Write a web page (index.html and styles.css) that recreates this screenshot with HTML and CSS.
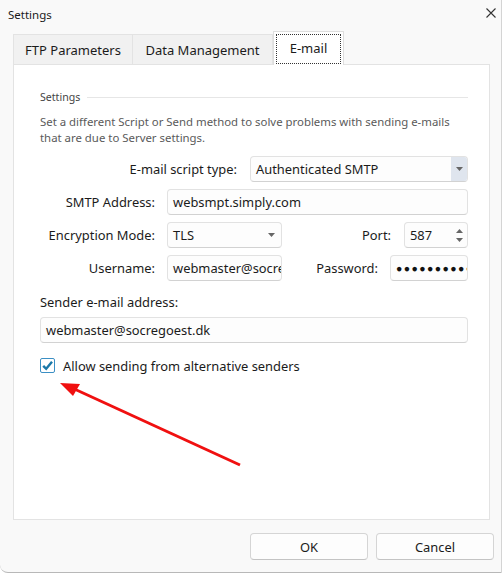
FILE: index.html
```html
<!DOCTYPE html>
<html>
<head>
  <title>Settings</title>
  <link rel="stylesheet" href="styles.css">
</head>
<body>
  <div class="window">
    <div class="titlebar">
      <span class="title">Settings</span>
      <svg class="close" width="10" height="10" viewBox="0 0 10 10">
        <path d="M0.5 0.5 L9.5 9.5 M9.5 0.5 L0.5 9.5" stroke="#333" stroke-width="1.1" fill="none"/>
      </svg>
    </div>

    <div class="tabs">
      <div class="tab tab-ftp">FTP Parameters</div>
      <div class="tab tab-data">Data Management</div>
      <div class="tab tab-mail active"><span class="focus">E-mail</span></div>
    </div>

    <div class="panel">
      <div class="legend"><span>Settings</span><div class="legend-line"></div></div>
      <p class="desc">Set a different Script or Send method to solve problems with sending e-mails<br>that are due to Server settings.</p>

      <div class="row row-first">
        <label class="lbl lbl-wide">E-mail script type:</label>
        <div class="field select select-wide">
          <span>Authenticated SMTP</span>
          <div class="drop drop-shaded">
            <svg width="7" height="4" viewBox="0 0 7 4"><path d="M0 0 H7 L3.5 4 Z" fill="#666"/></svg>
          </div>
        </div>
      </div>

      <div class="row">
        <label class="lbl">SMTP Address:</label>
        <div class="field grow">websmpt.simply.com</div>
      </div>

      <div class="row">
        <label class="lbl">Encryption Mode:</label>
        <div class="field select small">
          <span>TLS</span>
          <div class="drop">
            <svg width="7" height="4" viewBox="0 0 7 4"><path d="M0 0 H7 L3.5 4 Z" fill="#666"/></svg>
          </div>
        </div>
        <label class="lbl lbl-port">Port:</label>
        <div class="field spin">
          <span>587</span>
          <div class="spin-btns">
            <svg width="7" height="4" viewBox="0 0 7 4"><path d="M0 4 H7 L3.5 0 Z" fill="#666"/></svg>
            <svg width="7" height="4" viewBox="0 0 7 4"><path d="M0 0 H7 L3.5 4 Z" fill="#666"/></svg>
          </div>
        </div>
      </div>

      <div class="row">
        <label class="lbl">Username:</label>
        <div class="field small clip"><span class="clip-text">webmaster@socregoest.dk</span></div>
        <label class="lbl lbl-pass">Password:</label>
        <div class="field pass clip"><span class="clip-text">●●●●●●●●●●</span></div>
      </div>

      <div class="sender-label">Sender e-mail address:</div>
      <div class="field sender">webmaster@socregoest.dk</div>

      <div class="check-row">
        <span class="checkbox">
          <svg width="13" height="13" viewBox="0 0 13 13"><path d="M2.2 6.8 L5.2 9.8 L11 2.8" stroke="#1b78a8" stroke-width="2.4" fill="none"/></svg>
        </span>
        <span>Allow sending from alternative senders</span>
      </div>
    </div>

    <div class="footer">
      <button class="btn">OK</button>
      <button class="btn">Cancel</button>
    </div>

    <svg class="arrow" width="502" height="573" viewBox="0 0 502 573">
      <line x1="240" y1="465" x2="70" y2="387" stroke="#f01010" stroke-width="3"/>
      <polygon points="60,383 80,384 73,396" fill="#f01010"/>
    </svg>
  </div>
</body>
</html>
```

FILE: styles.css
```css
html, body {
  margin: 0;
  padding: 0;
}
body {
  font-family: "Noto Sans", "Open Sans", sans-serif;
  color: #1b1b1b;
  background: #ffffff;
}
.window {
  position: relative;
  width: 501px;
  height: 572px;
  background: #f9f9f9;
  border-right: 1px solid #d4d4d4;
  border-bottom: 1px solid #b8b8b8;
  border-bottom-left-radius: 8px;
  overflow: hidden;
}
.titlebar {
  height: 28px;
  display: flex;
  align-items: center;
  justify-content: space-between;
  padding: 0 5px 0 8px;
}
.title {
  font-size: 11.5px;
  color: #1a1a1a;
}
.close {
  margin-top: -2px;
}
.tabs {
  display: flex;
  align-items: flex-end;
  height: 36px;
  margin-left: 13px;
}
.tab {
  height: 30px;
  display: flex;
  align-items: center;
  justify-content: center;
  font-size: 13px;
  background: #f1f1f1;
  border: 1px solid #e3e3e3;
  border-bottom: none;
  box-sizing: border-box;
}
.tab-ftp {
  width: 119px;
  border-right: none;
}
.tab-data {
  width: 141px;
}
.tab-mail {
  width: 71px;
}
.tab.active {
  height: 34px;
  background: #ffffff;
  margin-bottom: -1px;
  position: relative;
  z-index: 1;
  border-color: #dedede;
  align-items: stretch;
  padding: 2px 2px 1px 2px;
}
.focus {
  flex: 1;
  display: flex;
  align-items: center;
  justify-content: center;
  border: 1px dotted #333;
  padding-bottom: 3px;
}
.panel {
  margin-left: 13px;
  width: 477px;
  height: 456px;
  box-sizing: border-box;
  background: #ffffff;
  border: 1px solid #e3e3e3;
  padding: 25px 21px 0 26px;
}
.legend {
  display: flex;
  align-items: center;
  height: 14px;
  font-size: 10.6px;
  color: #444;
}
.legend-line {
  flex: 1;
  height: 1px;
  background: #e6e6e6;
  margin-left: 7px;
}
.desc {
  margin: 10px 0 0 0;
  font-size: 11.4px;
  line-height: 16px;
  color: #5a5a5a;
}
.row {
  display: flex;
  align-items: center;
  height: 26px;
  margin-top: 7px;
  font-size: 12.9px;
}
.row-first {
  margin-top: 10px;
}
.lbl {
  width: 115px;
  text-align: right;
  margin-right: 12px;
  white-space: nowrap;
}
.lbl-wide {
  width: 197px;
  margin-right: 13px;
}
.lbl-port {
  width: 109px;
  margin-right: 13px;
}
.lbl-pass {
  width: 96px;
  margin-right: 12px;
}
.field {
  height: 26px;
  box-sizing: border-box;
  border: 1px solid #e2e2e2;
  border-bottom-color: #d2d2d2;
  border-radius: 4px;
  background: #fdfdfd;
  display: flex;
  align-items: center;
  padding: 0 5px;
  font-size: 12.9px;
  white-space: nowrap;
}
.grow {
  flex: 1;
}
.clip {
  overflow: hidden;
}
.clip-text {
  flex-shrink: 0;
}
.select {
  justify-content: space-between;
  padding-right: 0;
}
.select-wide {
  width: 218px;
}
.small {
  width: 115px;
}
.drop {
  width: 16px;
  height: 24px;
  display: flex;
  align-items: center;
  justify-content: center;
  margin-right: 2px;
}
.drop-shaded {
  background: #dfe5ee;
  margin-right: 0;
  border-radius: 0 3px 3px 0;
}
.spin {
  width: 64px;
  justify-content: space-between;
  padding-right: 4px;
}
.spin-btns {
  display: flex;
  flex-direction: column;
  gap: 5px;
}
.pass {
  width: 78px;
  font-size: 10.5px;
  letter-spacing: 1.4px;
  color: #111;
}
.sender-label {
  margin-top: 13px;
  font-size: 12.9px;
  line-height: 16px;
}
.sender {
  margin-top: 7px;
}
.check-row {
  display: flex;
  align-items: center;
  height: 17px;
  margin-top: 14px;
  font-size: 12.9px;
}
.checkbox {
  width: 15px;
  height: 15px;
  box-sizing: border-box;
  border: 1px solid #3b8fc4;
  border-radius: 2px;
  background: #fff;
  display: flex;
  align-items: center;
  justify-content: center;
  margin-right: 8px;
}
.footer {
  display: flex;
  justify-content: flex-end;
  gap: 8px;
  padding: 13px 7px 0 0;
}
.btn {
  width: 118px;
  height: 27px;
  font-family: "Noto Sans", "Open Sans", sans-serif;
  font-size: 12.9px;
  color: #1b1b1b;
  background: #fdfdfd;
  border: 1px solid #d5d5d5;
  border-bottom-color: #c4c4c4;
  border-radius: 4px;
  padding: 0;
}
.arrow {
  position: absolute;
  left: 0;
  top: 0;
  pointer-events: none;
}
```
